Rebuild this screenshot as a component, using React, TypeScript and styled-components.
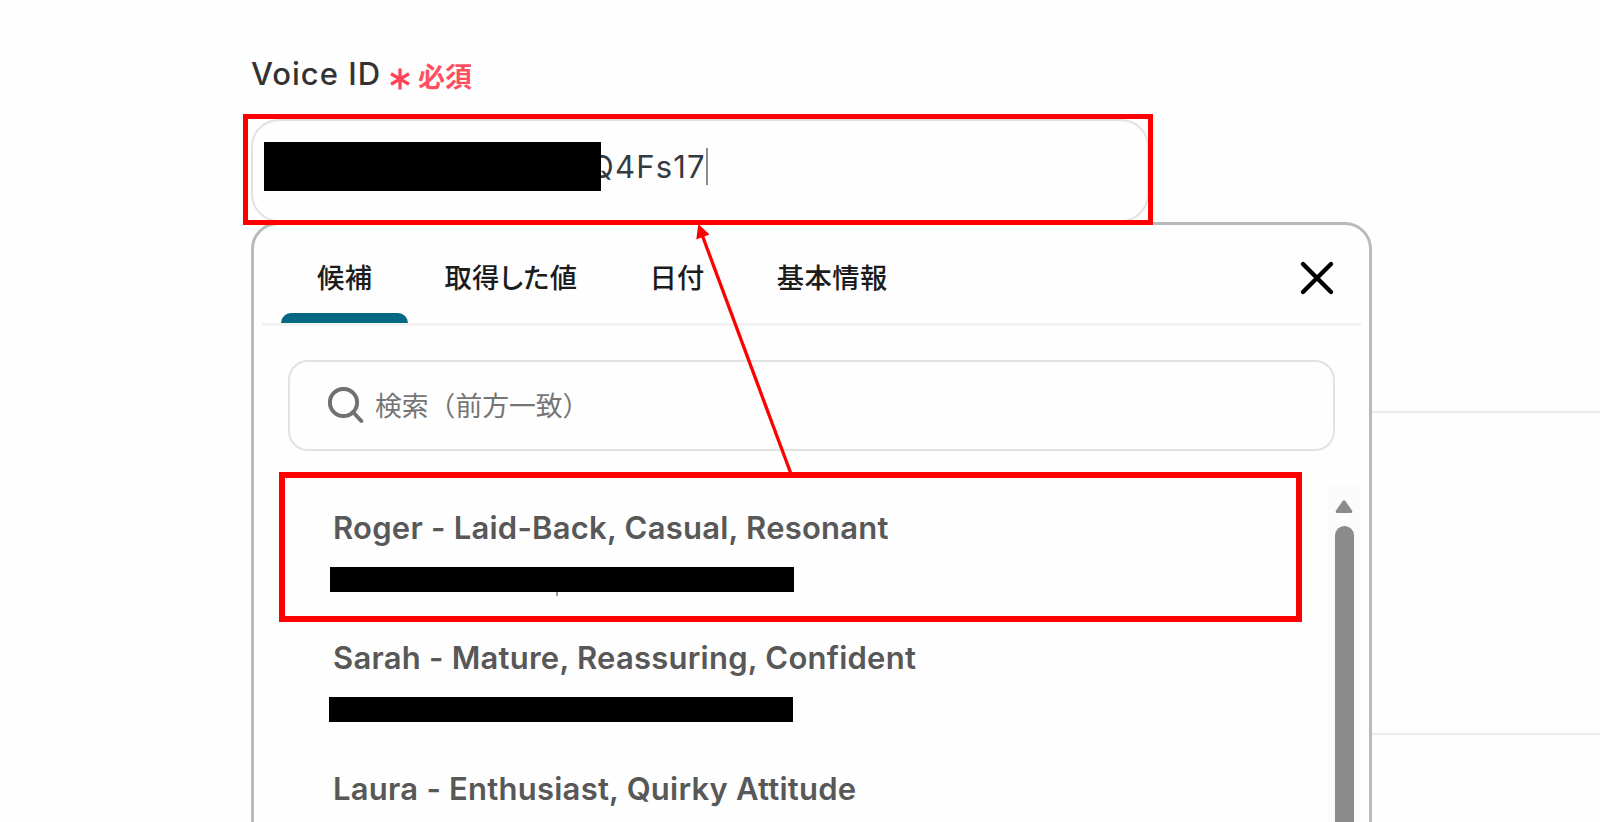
import { useState } from "react";
import styled, { createGlobalStyle } from "styled-components";

type Voice = {
  name: string;
  maskOffset: number;
  hasDescender?: boolean;
};

const TABS = ["候補", "取得した値", "日付", "基本情報"];

const VOICES: Voice[] = [
  { name: "Roger - Laid-Back, Casual, Resonant", maskOffset: 0, hasDescender: true },
  { name: "Sarah - Mature, Reassuring, Confident", maskOffset: -1 },
  { name: "Laura - Enthusiast, Quirky Attitude", maskOffset: 0 },
];

const GlobalStyle = createGlobalStyle`
  * {
    box-sizing: border-box;
  }

  body {
    margin: 0;
    background-color: #fefefe;
    font-family: "Inter", "Noto Sans CJK JP", sans-serif;
  }
`;

const Page = styled.main`
  position: relative;
  width: 1600px;
  height: 822px;
  overflow: hidden;
  padding-left: 251px;
`;

const Section = styled.section<{ $height: number }>`
  height: ${({ $height }) => $height}px;
  border-bottom: 2px solid #e9ecef;
`;

const LabelRow = styled.div`
  display: flex;
  align-items: center;
  height: 119px;
  padding-top: 29px;
`;

const Label = styled.label`
  line-height: 40px;
  font-size: 31px;
  font-weight: 450;
  letter-spacing: 1px;
  color: #333;
`;

const Required = styled.span`
  display: flex;
  align-items: center;
  gap: 8px;
  margin: 7px 0 0 9px;
  font-size: 27px;
  font-weight: 700;
  line-height: 40px;
  color: #ff5062;
`;

const Field = styled.div`
  position: relative;
  display: flex;
  align-items: center;
  width: 898px;
  height: 103px;
  padding: 0 0 8px 11px;
  border: 2px solid #e2e2e2;
  border-radius: 28px;
`;

const FieldMask = styled.span`
  z-index: 1;
  width: 337px;
  height: 49px;
  background-color: #000;
`;

const FieldValue = styled.span`
  margin-left: -11px;
  font-size: 31px;
  letter-spacing: 1.2px;
  color: #333a40;
`;

const Caret = styled.span`
  width: 2px;
  height: 37px;
  background-color: #8c8c8c;
`;

const Panel = styled.div`
  position: absolute;
  top: 222px;
  left: 251px;
  width: 1121px;
  height: 640px;
  border: 3px solid #bababa;
  border-radius: 27px;
  background-color: #fefefe;
`;

const PanelHeader = styled.div`
  display: flex;
  align-items: stretch;
  justify-content: space-between;
  height: 101px;
  margin: 0 8px;
  padding: 0 26px 0 19px;
  border-bottom: 3px solid #f2f2f2;
`;

const TabList = styled.div`
  display: flex;
`;

const Tab = styled.button<{ $active: boolean }>`
  display: flex;
  flex-direction: column;
  justify-content: flex-end;
  align-items: center;
  padding: 0;
  border: 0;
  background: none;
  font: inherit;
  cursor: pointer;

  &::after {
    content: "";
    width: 100%;
    height: 10px;
    border-radius: 10px 10px 0 0;
    background-color: ${({ $active }) => ($active ? "#036883" : "transparent")};
  }
`;

const TabLabel = styled.span`
  padding: 0 36px;
  margin-bottom: 14px;
  font-size: 27.3px;
  font-weight: 500;
  font-feature-settings: "palt" 1;
  letter-spacing: 0.4px;
  line-height: 40px;
  color: #1c1c1c;
`;

const CloseButton = styled.button`
  align-self: center;
  width: 36px;
  height: 36px;
  margin-top: 8px;
  padding: 0;
  border: 0;
  background: none;
  cursor: pointer;
`;

const SearchBox = styled.div`
  display: flex;
  align-items: center;
  gap: 11px;
  width: 1047px;
  height: 91px;
  margin: 34px 0 0 34px;
  padding-left: 37px;
  border: 2.5px solid #e2e2e2;
  border-radius: 20px;
`;

const SearchPlaceholder = styled.span`
  font-size: 26.8px;
  line-height: 40px;
  color: #757575;
`;

const Results = styled.div`
  display: flex;
  justify-content: space-between;
  margin: 35px 8px 0 24px;
`;

const VoiceList = styled.ul`
  width: 1024px;
  margin: -14px 0 0;
  padding: 0;
  list-style: none;
`;

const VoiceItem = styled.li`
  display: flex;
  flex-direction: column;
  height: 130.4px;
  padding: 37px 0 0 52px;
`;

const VoiceName = styled.span`
  padding-left: 3px;
  font-size: 31px;
  font-weight: 560;
  letter-spacing: 0.24px;
  line-height: 38px;
  color: #585858;
`;

const VoiceMask = styled.span<{ $offset: number; $descender?: boolean }>`
  position: relative;
  width: 464px;
  height: 25px;
  margin: 20px 0 0 ${({ $offset }) => $offset}px;
  background-color: #000;

  &::after {
    content: "";
    display: ${({ $descender }) => ($descender ? "block" : "none")};
    position: absolute;
    top: 25px;
    left: 226px;
    width: 2px;
    height: 4px;
    background-color: #999;
  }
`;

const ScrollTrack = styled.div`
  display: flex;
  flex-direction: column;
  align-items: center;
  gap: 13px;
  width: 34px;
  height: 400px;
  padding-top: 14px;
  background-color: #fbfbfb;
`;

const ScrollThumb = styled.div`
  width: 19px;
  flex: 1;
  border-radius: 10px;
  background-color: #8b8b8b;
`;

const Highlight = styled.div<{
  $x: number;
  $y: number;
  $width: number;
  $height: number;
  $stroke: number;
}>`
  position: absolute;
  top: ${({ $y }) => $y}px;
  left: ${({ $x }) => $x}px;
  width: ${({ $width }) => $width}px;
  height: ${({ $height }) => $height}px;
  border: ${({ $stroke }) => $stroke}px solid #f00;
  pointer-events: none;
`;

const Arrow = styled.svg`
  position: absolute;
  top: 224px;
  left: 690px;
  pointer-events: none;
`;

const AsteriskIcon = () => (
  <svg width="20" height="24" viewBox="0 0 20 24" fill="none">
    <path
      d="M10 2.5v21M1 7.8l18 10.4M19 7.8L1 18.2"
      stroke="#ff4458"
      strokeWidth="3.3"
    />
  </svg>
);

const CloseIcon = () => (
  <svg width="36" height="36" viewBox="0 0 36 36" fill="none">
    <path
      d="M4 4l28 28M32 4L4 32"
      stroke="#000"
      strokeWidth="4.4"
      strokeLinecap="round"
    />
  </svg>
);

const SearchIcon = () => (
  <svg width="37" height="38" viewBox="0 0 37 38" fill="none">
    <g stroke="#717171" strokeWidth="4">
      <circle cx="16.5" cy="15.5" r="13.6" />
      <path d="M26 25l8.3 9" strokeLinecap="round" />
    </g>
  </svg>
);

export default function App() {
  const [activeTab, setActiveTab] = useState(TABS[0]);

  return (
    <>
      <GlobalStyle />
      <Page>
        <Section $height={413}>
          <LabelRow>
            <Label>Voice ID</Label>
            <Required>
              <AsteriskIcon />
              必須
            </Required>
          </LabelRow>
          <Field>
            <FieldMask />
            <FieldValue>Q4Fs17</FieldValue>
            <Caret />
          </Field>
        </Section>
        <Section $height={322} />

        <Panel>
          <PanelHeader>
            <TabList>
              {TABS.map((tab) => (
                <Tab
                  key={tab}
                  $active={tab === activeTab}
                  onClick={() => setActiveTab(tab)}
                >
                  <TabLabel>{tab}</TabLabel>
                </Tab>
              ))}
            </TabList>
            <CloseButton aria-label="閉じる">
              <CloseIcon />
            </CloseButton>
          </PanelHeader>
          <SearchBox>
            <SearchIcon />
            <SearchPlaceholder>検索（前方一致）</SearchPlaceholder>
          </SearchBox>
          <Results>
            <VoiceList>
              {VOICES.map(({ name, maskOffset, hasDescender }) => (
                <VoiceItem key={name}>
                  <VoiceName>{name}</VoiceName>
                  <VoiceMask $offset={maskOffset} $descender={hasDescender} />
                </VoiceItem>
              ))}
            </VoiceList>
            <ScrollTrack>
              <svg width="18" height="13" viewBox="0 0 18 13">
                <path
                  d="M7.5 1.2Q9 -.8 10.5 1.2L17 10.5Q18 13 15.5 13H2.5Q0 13 1 10.5Z"
                  fill="#8b8b8b"
                />
              </svg>
              <ScrollThumb />
            </ScrollTrack>
          </Results>
        </Panel>

        <Highlight $x={243} $y={113.5} $width={910} $height={111.5} $stroke={5} />
        <Highlight $x={278.5} $y={472} $width={1023.5} $height={150} $stroke={6} />
        <Arrow width="110" height="250" viewBox="0 0 110 250">
          <path d="M12.5 12L100.5 248.5" stroke="#f00" strokeWidth="3.3" />
          <path d="M8.3 0L19.5 10.5L6.3 15.5Z" fill="#f00" />
        </Arrow>
      </Page>
    </>
  );
}
